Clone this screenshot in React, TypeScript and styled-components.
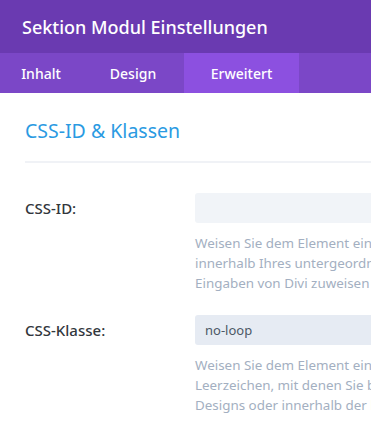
import styled, { createGlobalStyle } from 'styled-components';

const GlobalStyle = createGlobalStyle`
  html, body {
    margin: 0;
    padding: 0;
    background: #ffffff;
    overflow: hidden;
  }
  body {
    font-family: 'Noto Sans', 'Open Sans', 'DejaVu Sans', sans-serif;
  }
`;

interface Tab {
  label: string;
  width: number;
  active?: boolean;
}

const tabs: Tab[] = [
  { label: 'Inhalt', width: 82 },
  { label: 'Design', width: 102 },
  { label: 'Erweitert', width: 115, active: true },
];

const fields = [
  {
    label: 'CSS-ID:',
    value: '',
    filled: false,
    help: [
      'Weisen Sie dem Element eine eindeutige CSS-ID zu, mit der Sie benutzerdefinierte CSS-Stile',
      'innerhalb Ihres untergeordneten Designs oder innerhalb der benutzerdefinierten CSS-',
      'Eingaben von Divi zuweisen können.',
    ],
  },
  {
    label: 'CSS-Klasse:',
    value: 'no-loop',
    filled: true,
    help: [
      'Weisen Sie dem Element eine beliebige Anzahl von CSS-Klassen zu, getrennt durch',
      'Leerzeichen, mit denen Sie benutzerdefinierte CSS-Stile innerhalb Ihres untergeordneten',
      'Designs oder innerhalb der benutzerdefinierten CSS-Eingaben von Divi zuweisen können.',
    ],
  },
];

const App = () => {
  return (
    <Wrapper>
      <GlobalStyle />
      <Header>
        <Title>Sektion Modul Einstellungen</Title>
      </Header>
      <TabBar>
        {tabs.map((tab) => (
          <TabItem key={tab.label} $width={tab.width} $active={tab.active}>
            {tab.label}
          </TabItem>
        ))}
      </TabBar>
      <Content>
        <SectionTitle>CSS-ID &amp; Klassen</SectionTitle>
        <Divider />
        {fields.map((field) => (
          <FieldRow key={field.label}>
            <Label>{field.label}</Label>
            <FieldColumn>
              <Input $filled={field.filled}>{field.value}</Input>
              <Help>
                {field.help.map((line) => (
                  <HelpLine key={line}>{line}</HelpLine>
                ))}
              </Help>
            </FieldColumn>
          </FieldRow>
        ))}
      </Content>
    </Wrapper>
  );
};

const Wrapper = styled.div`
  width: 371px;
  height: 429px;
  overflow: hidden;
`;

const Header = styled.div`
  height: 53px;
  background: #6a3ab1;
  display: flex;
  align-items: center;
  padding-left: 22px;
`;

const Title = styled.h1`
  margin: 0;
  font-size: 18px;
  font-weight: 500;
  color: #ffffff;
  white-space: nowrap;
`;

const TabBar = styled.div`
  height: 40px;
  background: #7b47c7;
  display: flex;
`;

const TabItem = styled.div<{ $width: number; $active?: boolean }>`
  width: ${(p) => p.$width}px;
  display: flex;
  align-items: center;
  justify-content: center;
  font-size: 14px;
  font-weight: 500;
  color: #ffffff;
  background: ${(p) => (p.$active ? '#8c50e0' : 'transparent')};
`;

const Content = styled.div`
  padding: 23px 0 0 25px;
`;

const SectionTitle = styled.h2`
  margin: 0;
  font-size: 19.5px;
  font-weight: 400;
  line-height: 30px;
  color: #2a9ae2;
  white-space: nowrap;
`;

const Divider = styled.div`
  height: 2px;
  background: #f0f2f6;
  margin-top: 15px;
`;

const FieldRow = styled.div`
  display: flex;
  margin-top: 30px;
  & + & {
    margin-top: 22px;
  }
`;

const Label = styled.div`
  width: 170px;
  flex-shrink: 0;
  font-size: 15px;
  font-weight: 500;
  line-height: 30px;
  color: #32373c;
`;

const FieldColumn = styled.div`
  display: flex;
  flex-direction: column;
`;

const Input = styled.div<{ $filled: boolean }>`
  width: 400px;
  height: 30px;
  box-sizing: border-box;
  padding: 0 10px;
  border-radius: 3px;
  background: ${(p) => (p.$filled ? '#e6ebf3' : '#f1f4f8')};
  font-size: 13px;
  line-height: 30px;
  color: #4c5866;
`;

const Help = styled.div`
  margin-top: 10px;
`;

const HelpLine = styled.div`
  font-size: 13.4px;
  line-height: 20px;
  color: #a3afc1;
  white-space: nowrap;
`;

export default App;
